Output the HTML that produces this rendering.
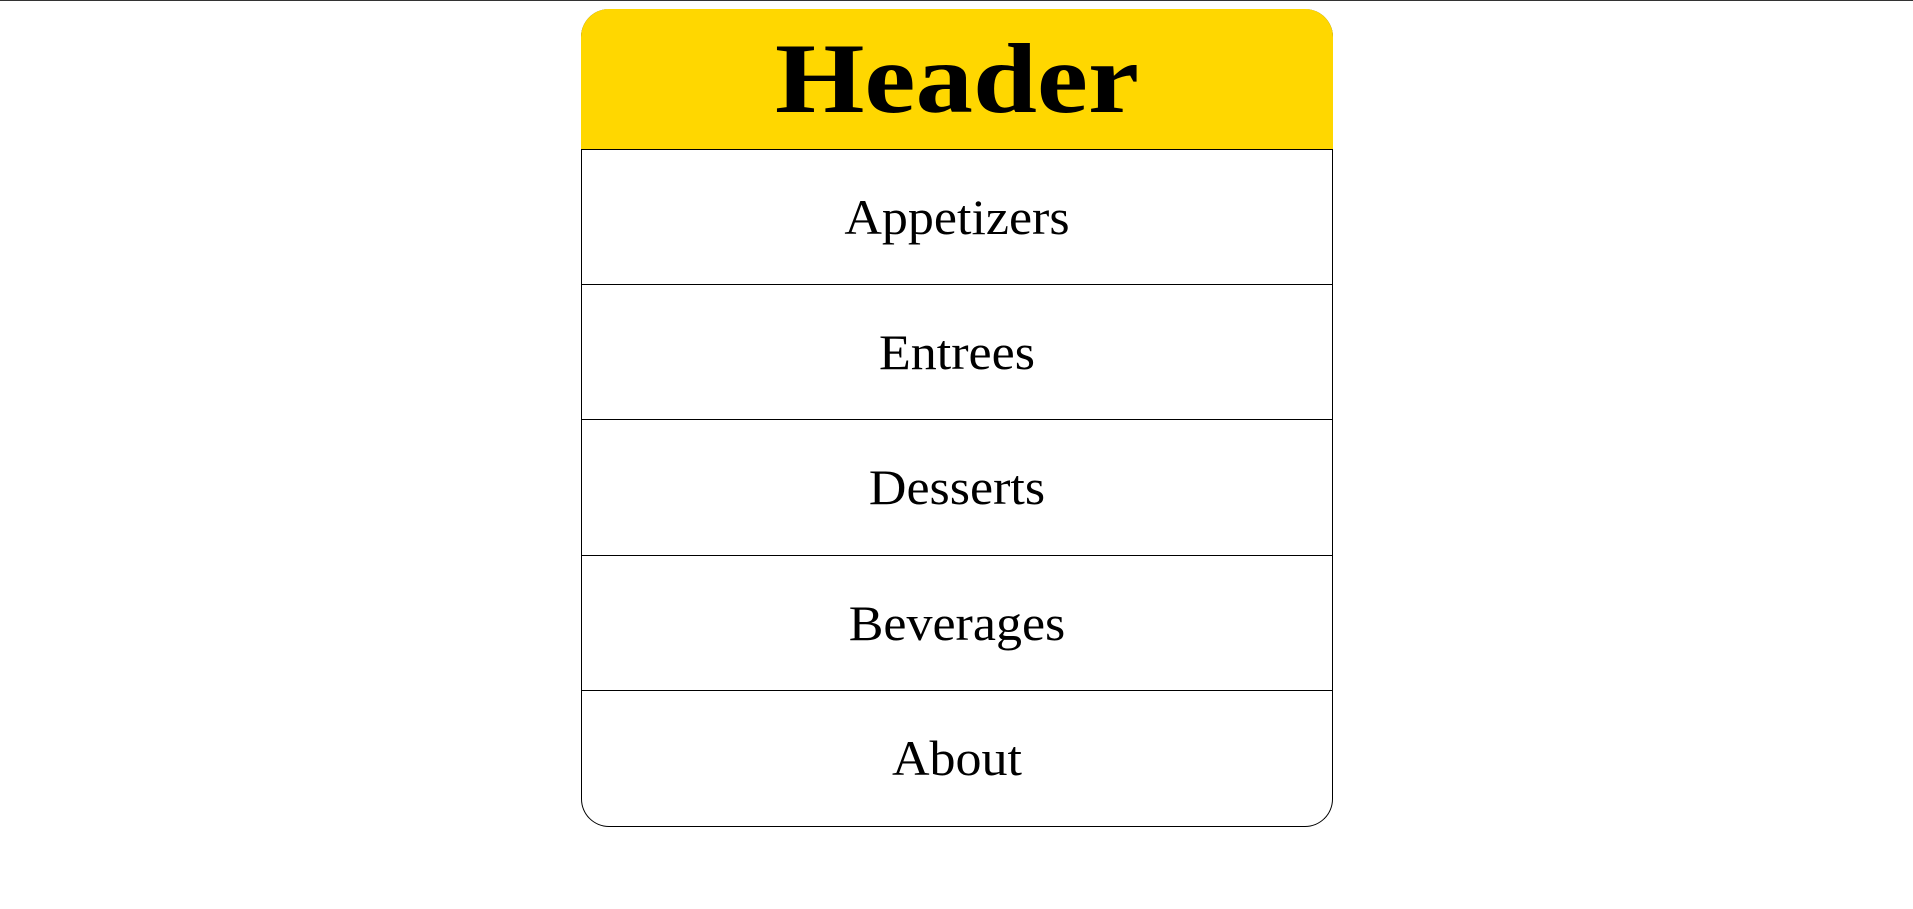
<!DOCTYPE html>
<html><head><style>
html,body{margin:0;padding:0;background:#fff;width:1913px;height:909px;overflow:hidden}
.topline{position:absolute;left:0;top:0;width:1913px;height:1px;background:#333}
.card{position:absolute;left:581px;top:9px;width:750px;height:817px;border:1px solid #000;border-top:none;border-radius:28px;box-sizing:content-box}
.hdr{height:141px;background:#ffd700;border-bottom:1px solid #000;box-sizing:border-box;position:relative;border-radius:28px 28px 0 0;margin:0 -1px}
.hdr span{position:absolute;left:0;right:0;top:70px;text-align:center;font:bold 100px/0 "Liberation Serif",serif;transform:scaleX(1.15)}
.row{height:135.2px;border-bottom:1px solid #000;box-sizing:border-box;position:relative}
.row:last-child{border-bottom:none}
.row span{position:absolute;left:0;right:0;top:67px;text-align:center;font:50px/0 "Liberation Serif",serif;transform:scaleX(1.04)}
</style></head><body>
<div class="topline"></div>
<div class="card">
<div class="hdr"><span>Header</span></div>
<div class="row"><span>Appetizers</span></div>
<div class="row"><span>Entrees</span></div>
<div class="row"><span>Desserts</span></div>
<div class="row"><span>Beverages</span></div>
<div class="row"><span>About</span></div>
</div>
</body></html>
